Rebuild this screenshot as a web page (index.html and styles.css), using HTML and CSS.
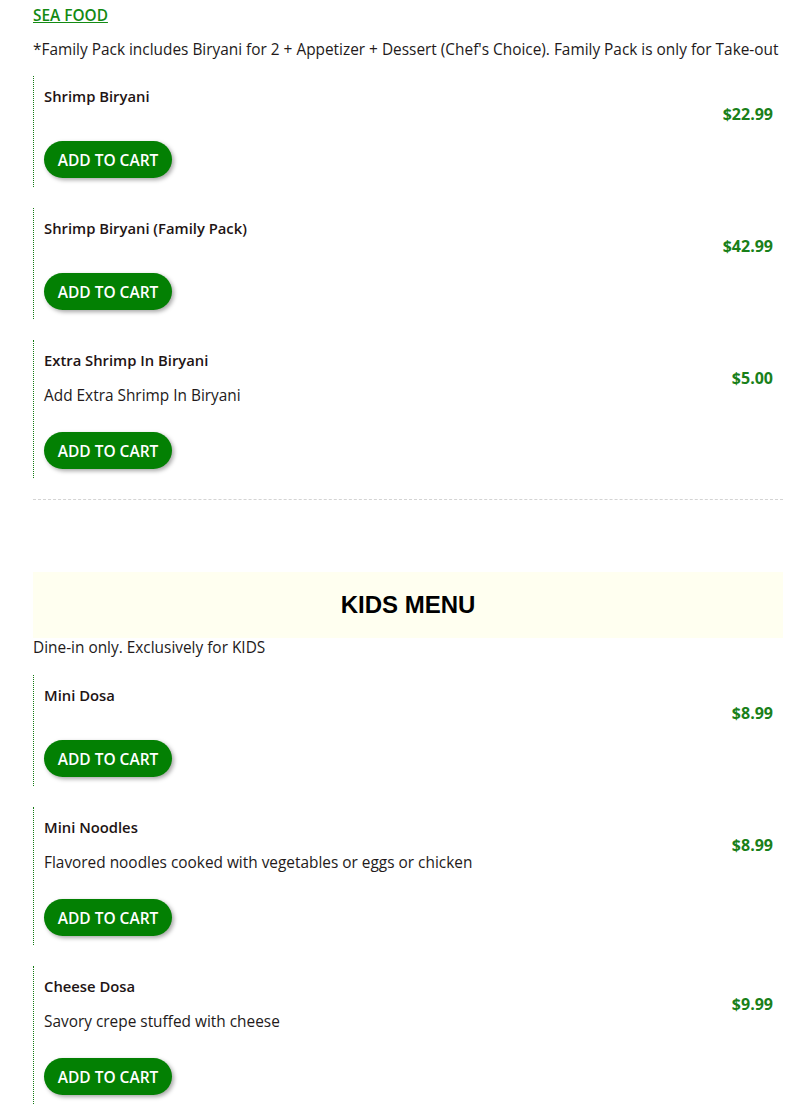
FILE: index.html
```html
<!DOCTYPE html>
<html>
<head>
<meta charset="utf-8">
<link rel="stylesheet" href="styles.css">
</head>
<body>
<div class="menu">
  <section class="category">
    <a class="cat-link" href="#">SEA FOOD</a>
    <p class="cat-note">*Family Pack includes Biryani for 2 + Appetizer + Dessert (Chef's Choice). Family Pack is only for Take-out</p>
    <div class="items">
      <div class="item">
        <div class="item-main">
          <div class="item-name">Shrimp Biryani</div>
          <button class="cart-btn">ADD TO CART</button>
        </div>
        <div class="item-price">$22.99</div>
      </div>
      <div class="item">
        <div class="item-main">
          <div class="item-name">Shrimp Biryani (Family Pack)</div>
          <button class="cart-btn">ADD TO CART</button>
        </div>
        <div class="item-price">$42.99</div>
      </div>
      <div class="item">
        <div class="item-main">
          <div class="item-name">Extra Shrimp In Biryani</div>
          <div class="item-desc">Add Extra Shrimp In Biryani</div>
          <button class="cart-btn">ADD TO CART</button>
        </div>
        <div class="item-price">$5.00</div>
      </div>
    </div>
    <hr class="divider">
  </section>

  <section class="category kids">
    <h2 class="cat-title">KIDS MENU</h2>
    <p class="cat-sub">Dine-in only. Exclusively for KIDS</p>
    <div class="items">
      <div class="item">
        <div class="item-main">
          <div class="item-name">Mini Dosa</div>
          <button class="cart-btn">ADD TO CART</button>
        </div>
        <div class="item-price">$8.99</div>
      </div>
      <div class="item">
        <div class="item-main">
          <div class="item-name">Mini Noodles</div>
          <div class="item-desc">Flavored noodles cooked with vegetables or eggs or chicken</div>
          <button class="cart-btn">ADD TO CART</button>
        </div>
        <div class="item-price">$8.99</div>
      </div>
      <div class="item">
        <div class="item-main">
          <div class="item-name">Cheese Dosa</div>
          <div class="item-desc">Savory crepe stuffed with cheese</div>
          <button class="cart-btn">ADD TO CART</button>
        </div>
        <div class="item-price">$9.99</div>
      </div>
    </div>
  </section>
</div>
</body>
</html>
```

FILE: styles.css
```css
* { box-sizing: border-box; }
html, body { margin: 0; padding: 0; background: #fff; }
body {
  font-family: "Open Sans", "Noto Sans", sans-serif;
  color: #231a1a;
  font-size: 15.4px;
  overflow: hidden;
}
.menu {
  width: 750px;
  margin-left: 33px;
  padding-top: 5px;
}
.cat-link {
  display: inline-block;
  color: #138a13;
  font-weight: 600;
  font-size: 15.4px;
  line-height: 20px;
  text-decoration: underline;
}
.cat-note {
  margin: 14px 0 0;
  line-height: 20px;
  font-size: 15.4px;
  white-space: nowrap;
}
.items {
  display: flex;
  flex-direction: column;
  gap: 21px;
  margin-top: 16px;
}
.item {
  display: flex;
  justify-content: space-between;
  align-items: flex-start;
  border-left: 1px dotted #137a13;
  padding: 10px 10px 9px 10px;
}
.item-main {
  display: flex;
  flex-direction: column;
  align-items: flex-start;
}
.item-name {
  font-weight: 600;
  font-size: 14.8px;
  line-height: 20px;
  color: #1e1414;
}
.item-desc {
  margin-top: 16px;
  line-height: 20px;
  font-size: 15.4px;
}
.cart-btn {
  margin-top: 35px;
  width: 128px;
  height: 37px;
  border: none;
  border-radius: 19px;
  background: #038003;
  color: #fff;
  font-family: inherit;
  font-weight: 600;
  font-size: 15.5px;
  box-shadow: 2px 2px 4px rgba(0,0,0,0.35);
  padding: 0;
  cursor: pointer;
}
.item-desc + .cart-btn { margin-top: 26px; }
.item-price {
  margin-top: 18px;
  color: #198019;
  font-weight: 700;
  font-size: 16px;
  line-height: 20px;
}
.divider {
  margin: 21px 0 0;
  border: none;
  border-top: 1px dashed #d4d4d4;
  height: 0;
}
.kids { margin-top: 72px; }
.cat-title {
  margin: 0;
  background: #fffff0;
  height: 66px;
  display: flex;
  align-items: center;
  justify-content: center;
  font-family: "Liberation Sans", Arial, sans-serif;
  font-weight: 700;
  font-size: 24px;
  color: #000;
}
.cat-sub {
  margin: 0;
  line-height: 20px;
  font-size: 15.4px;
}
.kids .items { margin-top: 17px; }
```
